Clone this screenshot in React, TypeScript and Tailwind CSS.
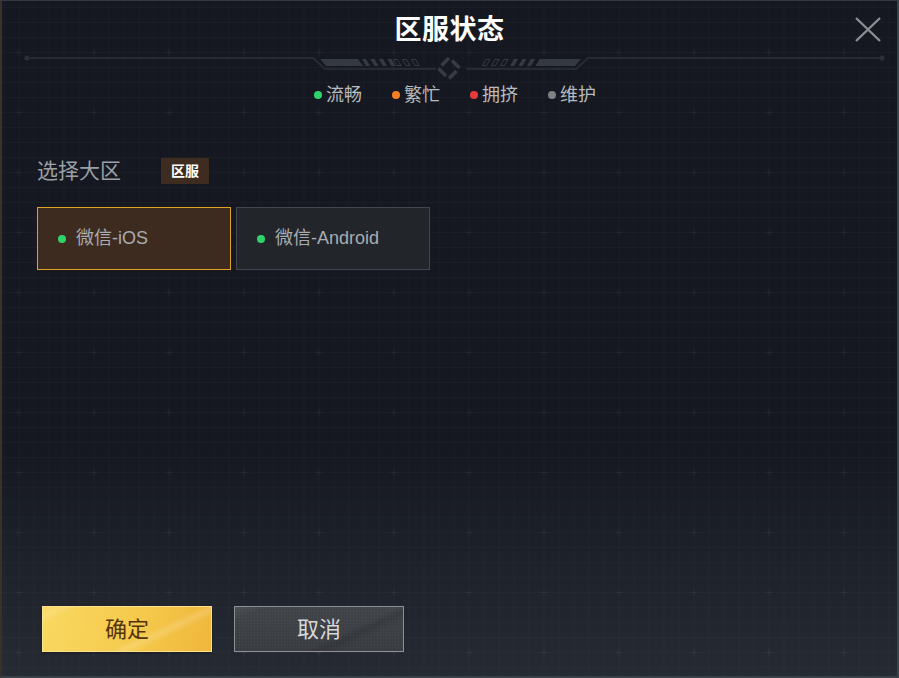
import React from "react";

function BgPattern() {
  return (
    <svg className="absolute inset-0 pointer-events-none" width="895" height="675">
      <defs>
        <pattern id="grid" x="-20.5" y="21" width="75" height="60" patternUnits="userSpaceOnUse">
          <g stroke="rgba(255,255,255,0.018)" strokeWidth="1">
            <line x1="7.5" y1="0" x2="7.5" y2="60" />
            <line x1="22.5" y1="0" x2="22.5" y2="60" />
            <line x1="37.5" y1="0" x2="37.5" y2="60" />
            <line x1="52.5" y1="0" x2="52.5" y2="60" />
            <line x1="67.5" y1="0" x2="67.5" y2="60" />
            <line x1="0" y1="0.5" x2="75" y2="0.5" />
            <line x1="0" y1="15.5" x2="75" y2="15.5" />
            <line x1="0" y1="30.5" x2="75" y2="30.5" />
            <line x1="0" y1="45.5" x2="75" y2="45.5" />
          </g>
          <g stroke="rgba(255,255,255,0.035)" strokeWidth="1">
            <line x1="34" y1="30.5" x2="41" y2="30.5" />
            <line x1="37.5" y1="27" x2="37.5" y2="34" />
          </g>
        </pattern>
      </defs>
      <rect x="0" y="0" width="895" height="675" fill="url(#grid)" />
    </svg>
  );
}

function Decoration() {
  const line = "#262a32";
  const bar = "#353a42";
  const leftStripes = [362, 370.5, 379, 387.5];
  const leftOutlines = [393, 402, 411];
  const rightStripes = [510, 518.5, 527, 535.5];
  const rightOutlines = [482, 491, 500];
  return (
    <svg className="block shrink-0" width="895" height="30" viewBox="2 0 895 30">
      <circle cx="27" cy="8" r="2.5" fill="#2c3139" />
      <polyline points="27,8 313,8 325,19 436,19" fill="none" stroke={line} strokeWidth="2" />
      <polygon points="320,9 358,9 363,16 326,16" fill={bar} />
      {leftStripes.map((x) => (
        <polygon key={x} points={`${x},9 ${x + 4},9 ${x + 8},16 ${x + 4},16`} fill={bar} />
      ))}
      {leftOutlines.map((x) => (
        <polygon key={x} points={`${x + 0.5},9.5 ${x + 4.5},9.5 ${x + 8},15.5 ${x + 4},15.5`} fill="none" stroke={bar} strokeWidth="1" />
      ))}
      <g stroke="#373c44" strokeWidth="3.5" fill="none" strokeLinecap="butt">
        <line x1="449" y1="8" x2="441.5" y2="15.5" />
        <line x1="438.5" y1="18.5" x2="446" y2="26" />
        <line x1="449" y1="28.5" x2="456.5" y2="21" />
        <line x1="459.5" y1="18" x2="452" y2="10.5" />
      </g>
      <polyline points="466,19 576,19 588,8 882,8" fill="none" stroke={line} strokeWidth="2" />
      <circle cx="882" cy="8" r="2.5" fill="#2c3139" />
      <polygon points="543,9 581,9 575,16 538,16" fill={bar} />
      {rightStripes.map((x) => (
        <polygon key={x} points={`${x + 4},9 ${x + 8},9 ${x + 4},16 ${x},16`} fill={bar} />
      ))}
      {rightOutlines.map((x) => (
        <polygon key={x} points={`${x + 4},9.5 ${x + 8},9.5 ${x + 4.5},15.5 ${x + 0.5},15.5`} fill="none" stroke={bar} strokeWidth="1" />
      ))}
    </svg>
  );
}

const legend = [
  { label: "流畅", color: "bg-[#2fd36a]" },
  { label: "繁忙", color: "bg-[#f57f20]" },
  { label: "拥挤", color: "bg-[#e83b3b]" },
  { label: "维护", color: "bg-[#7f8184]" },
];

export default function App() {
  return (
    <div className='relative w-[899px] h-[678px] overflow-hidden flex flex-col border-t border-t-[#343a41] border-r-2 border-r-[#3b434a] border-b-2 border-b-[#394047] border-l-2 border-l-[#3a322a] bg-[linear-gradient(180deg,#151820_0%,#151820_66%,#262b33_100%)] font-[family-name:"Liberation_Sans","Noto_Sans_CJK_SC",sans-serif]'>
      <BgPattern />

      <div className="relative h-[49px] pt-[9px] flex justify-center items-center shrink-0">
        <h1 className="text-[27px] leading-[40px] font-bold text-white tracking-[0.5px]">区服状态</h1>
      </div>

      <button className="absolute top-[16px] right-[16px] w-[26px] h-[25px] flex items-center justify-center">
        <svg width="26" height="25" viewBox="0 0 26 25">
          <path d="M1 1 L25 24 M25 1 L1 24" stroke="#8b8e93" strokeWidth="2.4" fill="none" />
        </svg>
      </button>

      <div className="relative">
        <Decoration />
      </div>

      <div className="relative mt-[3px] h-[24px] flex justify-center items-center gap-[30px] pl-[11px]">
        {legend.map((l) => (
          <div key={l.label} className="flex items-center gap-[4px]">
            <span className={`w-[8px] h-[8px] rounded-full ${l.color}`} />
            <span className="text-[18px] leading-[24px] text-[#b8bbbf]">{l.label}</span>
          </div>
        ))}
      </div>

      <div className="relative pl-[35px]">
        <div className="mt-[51px] h-[26px] flex items-center">
          <span className="w-[84px] text-[21px] leading-[26px] text-[#9ca0a6] whitespace-nowrap">选择大区</span>
          <span className="ml-[40px] w-[48px] h-[26px] bg-[#3e2c21] text-white text-[14px] font-semibold flex items-center justify-center">
            区服
          </span>
        </div>

        <div className="mt-[23px] flex gap-[5px]">
          <div className="w-[194px] h-[63px] border border-[#e0a526] bg-[#3d2b20] flex items-center pl-[20px]">
            <span className="w-[8px] h-[8px] rounded-full bg-[#2fd36a] mr-[10px]" />
            <span className="text-[18px] text-[#a9acb0]">微信-iOS</span>
          </div>
          <div className="w-[194px] h-[63px] border border-[#42474d] bg-[#22262b] flex items-center pl-[20px]">
            <span className="w-[8px] h-[8px] rounded-full bg-[#2fd36a] mr-[10px]" />
            <span className="text-[18px] text-[#a9acb0]">微信-Android</span>
          </div>
        </div>
      </div>

      <div className="relative mt-auto pl-[40px] pb-[24px] flex gap-[22px]">
        <button className="w-[170px] h-[46px] border border-[#fbe28c] bg-[linear-gradient(155deg,transparent_0%,rgba(255,255,255,0.14)_8%,transparent_14%,transparent_60%,rgba(255,255,255,0.16)_66%,transparent_72%),linear-gradient(100deg,#f9d861_0%,#f5ca4c_55%,#f0b73c_100%)] text-[22px] text-[#553408] flex items-center justify-center shadow-[0_1px_2px_rgba(0,0,0,0.4)]">
          确定
        </button>
        <button className="w-[170px] h-[46px] border border-[#8c9095] bg-[linear-gradient(155deg,rgba(255,255,255,0.06)_0%,transparent_12%,transparent_62%,rgba(0,0,0,0.12)_68%,transparent_76%),radial-gradient(rgba(255,255,255,0.06)_0.8px,transparent_0.9px),linear-gradient(180deg,#414449,#393c41)] bg-[length:auto,3px_3px,auto] text-[22px] text-[#d6d7d9] flex items-center justify-center">
          取消
        </button>
      </div>
    </div>
  );
}
